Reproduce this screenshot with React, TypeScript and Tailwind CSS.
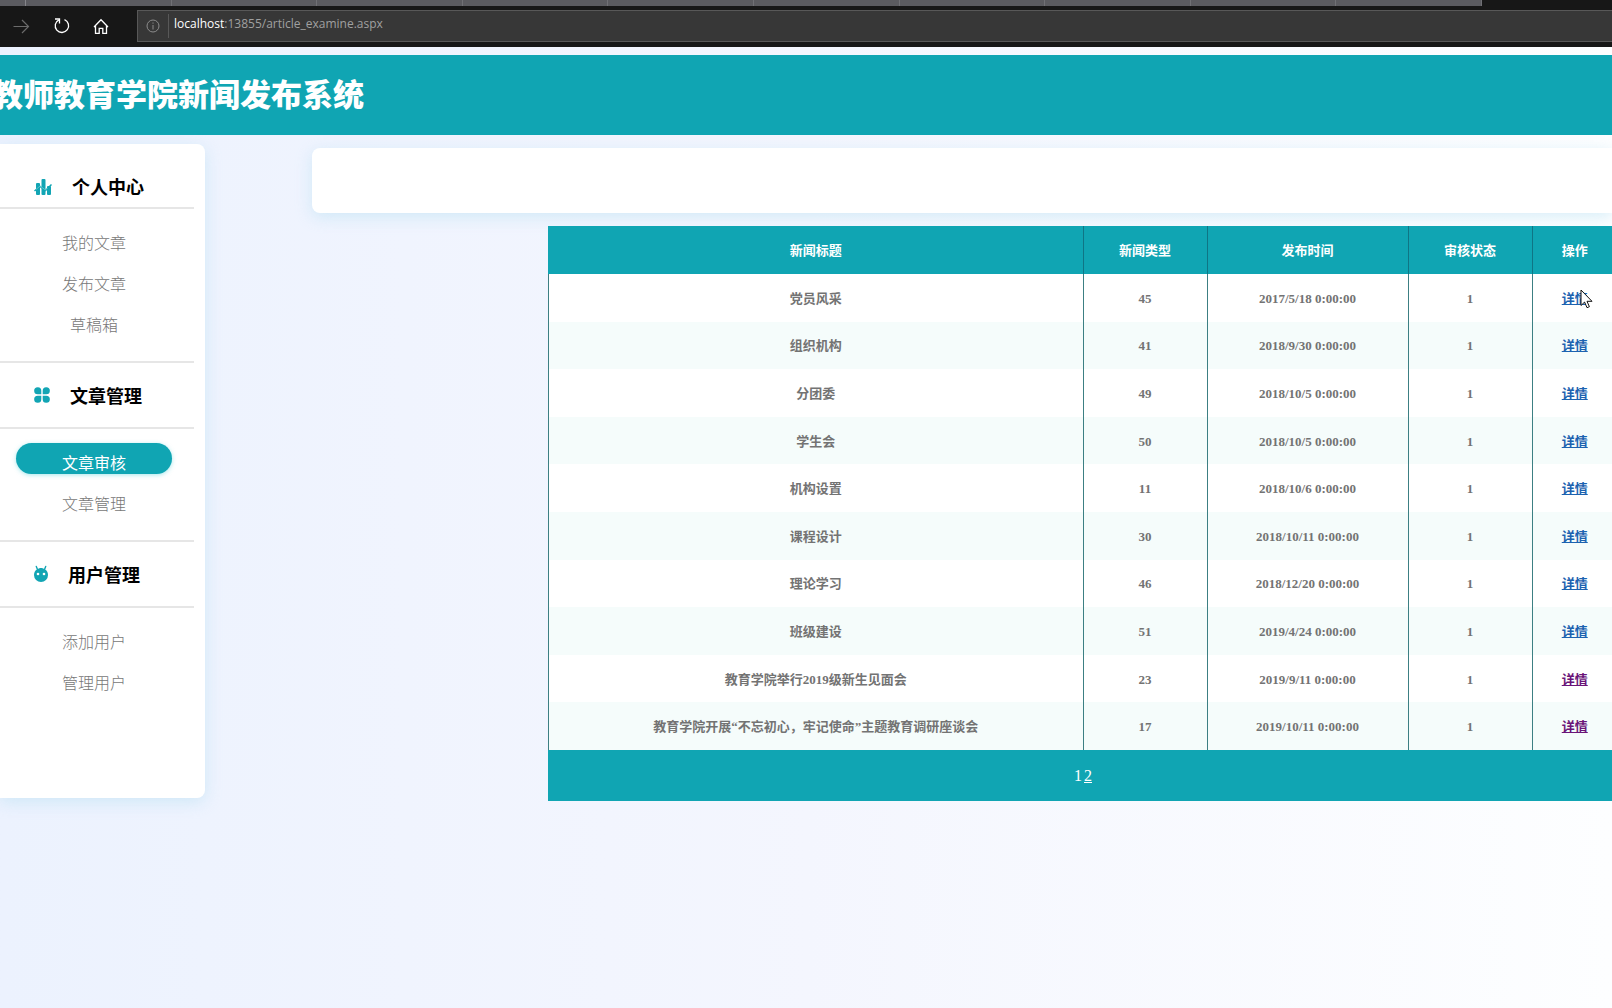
import React from "react";

type Article = {
  title: string;
  type: number;
  date: string;
  status: number;
  visited?: boolean;
};

const articles: Article[] = [
  { title: "党员风采", type: 45, date: "2017/5/18 0:00:00", status: 1 },
  { title: "组织机构", type: 41, date: "2018/9/30 0:00:00", status: 1 },
  { title: "分团委", type: 49, date: "2018/10/5 0:00:00", status: 1 },
  { title: "学生会", type: 50, date: "2018/10/5 0:00:00", status: 1 },
  { title: "机构设置", type: 11, date: "2018/10/6 0:00:00", status: 1 },
  { title: "课程设计", type: 30, date: "2018/10/11 0:00:00", status: 1 },
  { title: "理论学习", type: 46, date: "2018/12/20 0:00:00", status: 1 },
  { title: "班级建设", type: 51, date: "2019/4/24 0:00:00", status: 1 },
  { title: "教育学院举行2019级新生见面会", type: 23, date: "2019/9/11 0:00:00", status: 1, visited: true },
  { title: "教育学院开展“不忘初心，牢记使命”主题教育调研座谈会", type: 17, date: "2019/10/11 0:00:00", status: 1, visited: true },
];

const BarsIcon = () => (
  <svg width="18" height="18" viewBox="0 0 18 18" fill="#12a5b4" aria-hidden="true">
    <rect x="2" y="5" width="4" height="12" rx="1" />
    <rect x="7.500" y="1" width="4" height="16" rx="1" />
    <rect x="13" y="8" width="4" height="9" rx="1" />
    <path d="M.5 13 6 8.500l5.500 4L17.500 6.500" fill="none" stroke="#12a5b4" strokeWidth="1.500" />
    <path d="M2 11.500 6 8l5.500 4 2-2" fill="none" stroke="#8fd6dc" strokeWidth="0.600" />
  </svg>
);

const CloverIcon = () => (
  <svg width="16" height="18" viewBox="0 0 16 18" fill="#12a5b4" aria-hidden="true">
    <path d="M3.700 1.200A3.500 3.500 0 0 1 7.300 4.700V8.300H3.700A3.500 3.500 0 0 1 3.700 1.200Z" />
    <path d="M12.300 1.200A3.500 3.500 0 0 0 8.700 4.700V8.300H12.300A3.500 3.500 0 0 0 12.300 1.200Z" />
    <path d="M3.700 16.800A3.500 3.500 0 0 0 7.300 13.300V9.700H3.700A3.500 3.500 0 0 0 3.700 16.800Z" />
    <path d="M12.300 16.800A3.500 3.500 0 0 1 8.700 13.300V9.700H12.300A3.500 3.500 0 0 1 12.300 16.800Z" />
  </svg>
);

const BugIcon = () => (
  <svg width="14" height="18" viewBox="0 0 14 18" aria-hidden="true">
    <path d="M2.300 1.500 3.700 5M11.700 1.500 10.300 5" stroke="#12a5b4" strokeWidth="1.400" strokeLinecap="round" />
    <path d="M7 3C9.500 3 14 5 14 10a7 7 0 0 1-14 0C0 5 4.500 3 7 3Z" fill="#12a5b4" />
    <circle cx="4" cy="9" r="1.300" fill="#fff" />
    <circle cx="10" cy="9" r="1.300" fill="#fff" />
  </svg>
);

const menu = [
  { name: "个人中心", icon: <BarsIcon />, items: ["我的文章", "发布文章", "草稿箱"] },
  { name: "文章管理", icon: <CloverIcon />, items: ["文章审核", "文章管理"] },
  { name: "用户管理", icon: <BugIcon />, items: ["添加用户", "管理用户"] },
];

const BrowserBar: React.FC = () => (
  <div className="bg-[#171717]">
    <div className="h-[6px] flex mr-[130px]">
      <div className="w-[26px] shrink-0 bg-[#5b5b60] border-r border-[#85858a]"></div>
      {Array.from({ length: 10 }, (_, i) => (
        <div key={i} className="flex-1 bg-[#5b5b60] border-r border-[#707075]"></div>
      ))}
    </div>
    <div className="flex items-center pt-1 pb-[5px]">
      <button type="button" aria-label="前进" className="ml-3 w-[18px] text-[#6b6b6b]">
        <svg width="18" height="18" viewBox="0 0 18 18" fill="none" stroke="currentColor" strokeWidth="1.200">
          <path d="M1.500 9.500h15M10 3 16.500 9.500 10 16" />
        </svg>
      </button>
      <button type="button" aria-label="刷新" className="ml-6 w-[18px] text-white">
        <svg width="16" height="18" viewBox="0 0 16 18" fill="none" stroke="currentColor" strokeWidth="1.300">
          <path d="M10.500 2.600a6.700 6.700 0 1 1-5.600.2" />
          <path d="M1 2h4.500v4.500" />
        </svg>
      </button>
      <button type="button" aria-label="主页" className="ml-5 w-[18px] text-white">
        <svg width="18" height="18" viewBox="0 0 18 18" fill="none" stroke="currentColor" strokeWidth="1.300">
          <path d="M2 10 9 2.800 16 10M3.500 8.500v7.800h3.700v-5h3.600v5h3.700V8.500" />
        </svg>
      </button>
      <div className="ml-[27px] flex-1 h-8 flex items-center bg-[#373737] border border-r-0 border-[#585858]">
        <svg className="ml-2 shrink-0" width="14" height="14" viewBox="0 0 14 14" fill="none" stroke="#8c8c8c">
          <circle cx="7" cy="7" r="6" />
          <path d="M7 6v4.500M7 3.500v1.200" />
        </svg>
        <span className="ml-2 w-px h-6 bg-[#585858]"></span>
        <label
          htmlFor="address"
          className="ml-[5px] pb-1 font-['Open_Sans'] text-[12px] leading-5 text-white"
        >
          localhost
        </label>
        <input
          id="address"
          type="text"
          defaultValue=":13855/article_examine.aspx"
          className="flex-1 min-w-0 pb-1 bg-transparent outline-none font-['Open_Sans'] text-[12px] leading-5 text-[#a0a0a0]"
        />
      </div>
    </div>
  </div>
);

const Sidebar: React.FC = () => (
  <aside className="mt-[9px] w-[205px] shrink-0 min-h-[654px] pt-6 pr-[11px] bg-white rounded-r-lg shadow-[0_4px_16px_rgba(170,220,240,0.450)]">
    {menu.map((group, index) => (
      <section key={group.name}>
        <h2
          className={`flex items-center gap-5 pl-[34px] border-[#e6e6e6] border-b-2 text-[18px] font-bold text-black ${
            index === 0 ? "h-[41px] pb-[2px]" : "h-[68px] border-t-2"
          }`}
        >
          {group.icon}
          {group.name}
        </h2>
        <ul className="flex flex-col gap-[10px] pt-[14px] pb-[25px] pl-4 pr-[22px]">
          {group.items.map((item) => (
            <li key={item}>
              <a
                href="#"
                className={`block h-[31px] leading-[39px] text-center text-base rounded-full ${
                  item === "文章审核"
                    ? "bg-[#10a5b3] text-white shadow-[0_1px_4px_rgba(80,210,220,0.500)]"
                    : "text-[#777777] font-light"
                }`}
              >
                {item}
              </a>
            </li>
          ))}
        </ul>
      </section>
    ))}
  </aside>
);

const cell = "pt-[2px] border-l border-[#3c7f83] text-center align-middle";

const ArticleTable: React.FC = () => (
  <table className="w-full h-[575px] table-fixed font-['Liberation_Serif','Noto_Sans_CJK_SC',serif] text-[13px] leading-5 font-bold text-[#737373]">
    <thead>
      <tr className="h-12 bg-[#10a5b3] text-white">
        <th className="pt-[2px] border-l border-[#10a5b3]">新闻标题</th>
        <th className="pt-[2px] w-[124px] border-l border-[#0f7585]">新闻类型</th>
        <th className="pt-[2px] w-[201px] border-l border-[#0f7585]">发布时间</th>
        <th className="pt-[2px] w-[124px] border-l border-[#0f7585]">审核状态</th>
        <th className="pt-[2px] w-[85px] border-l border-[#0f7585]">操作</th>
      </tr>
    </thead>
    <tbody>
      {articles.map((article) => (
        <tr key={article.title} className="bg-white even:bg-[#f5fcfb]">
          <td className={cell}>{article.title}</td>
          <td className={cell}>{article.type}</td>
          <td className={cell}>{article.date}</td>
          <td className={cell}>{article.status}</td>
          <td className={cell}>
            <a href="#" className={article.visited ? "underline text-[#6a1478]" : "underline text-[#1c62b0]"}>
              详情
            </a>
          </td>
        </tr>
      ))}
    </tbody>
    <tfoot>
      <tr className="h-[51px] bg-[#10a5b3] text-white text-base font-normal">
        <td colSpan={5} className="border-l border-[#10a5b3]">
          <div className="flex justify-center gap-[2px]">
            <span>1</span>
            <a href="#" className="underline">
              2
            </a>
          </div>
        </td>
      </tr>
    </tfoot>
  </table>
);

const App: React.FC = () => {
  return (
    <div className="relative min-h-screen flex flex-col overflow-hidden font-['Noto_Sans_CJK_SC',sans-serif]">
      <BrowserBar />
      <div className="flex-1 pt-2 bg-linear-to-r from-[#ecf2fe] via-[#f4f6fe] to-[#fdfeff]">
        <header className="h-20 pb-1 flex items-center bg-[#10a5b3]">
          <h1 className="-ml-2 text-[31px] font-black text-white whitespace-nowrap">教师教育学院新闻发布系统</h1>
        </header>
        <div className="flex items-start">
          <Sidebar />
          <main className="flex-1 min-w-0 ml-[107px] pt-[13px]">
            <div className="h-[65px] bg-white rounded-l-lg shadow-[0_4px_16px_rgba(170,220,240,0.450)]"></div>
            <div className="mt-[13px] ml-[236px] -mr-[5px]">
              <ArticleTable />
            </div>
          </main>
        </div>
      </div>
      {/* mouse pointer */}
      <svg className="absolute left-[1580px] top-[289px]" width="13" height="20" viewBox="0 0 13 20" aria-hidden="true">
        <path d="M1 1v15.500l3.600-3.400 2.400 5.600 2.400-1-2.400-5.400H12Z" fill="#fff" stroke="#111" />
      </svg>
    </div>
  );
};

export default App;
